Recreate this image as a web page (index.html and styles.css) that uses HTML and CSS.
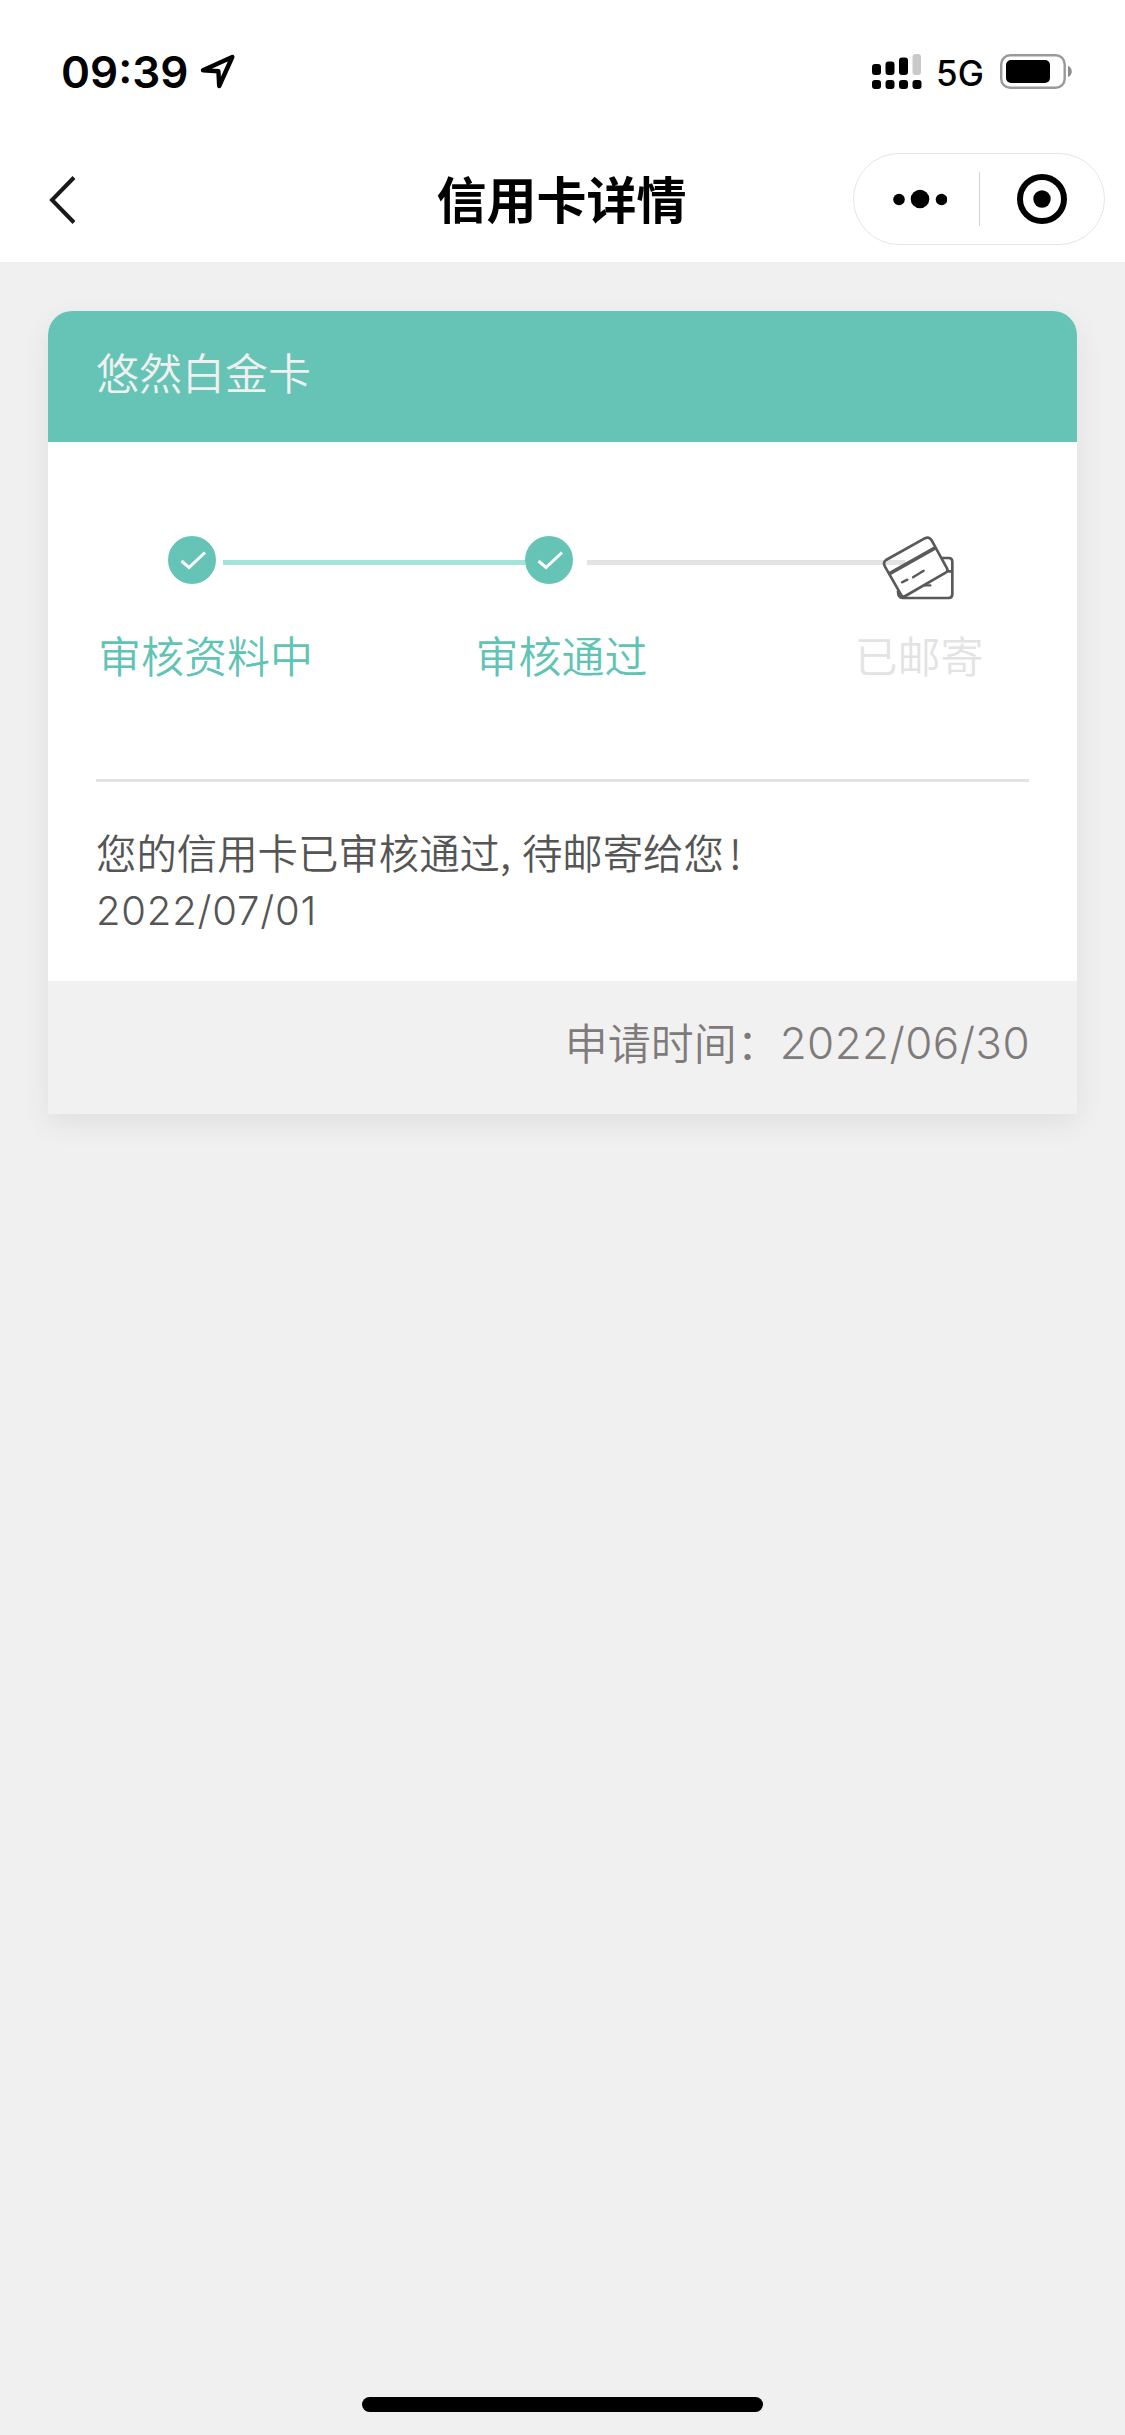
FILE: index.html
```html
<!DOCTYPE html>
<html lang="zh-CN">
<head>
<meta charset="utf-8">
<title>信用卡详情</title>
<link rel="stylesheet" href="styles.css">
</head>
<body>
<div class="screen">
  <header class="top">
    <div class="status-bar">
      <span class="clock">09:39</span>
      <svg class="location" width="36" height="36" viewBox="0 0 36 36"><path d="M3 16.2 32.3 3 19.2 32 18.4 17.3Z" fill="none" stroke="#000" stroke-width="4.4" stroke-linejoin="round"/></svg>
      <svg class="signal" width="50" height="36" viewBox="0 0 50 36">
        <rect x="0" y="10" width="9" height="11" rx="3"/><rect x="13.5" y="7.500" width="9" height="13.500" rx="3"/><rect x="27" y="3.500" width="9" height="17.500" rx="3"/><rect x="40.500" y="0" width="8.500" height="21" rx="3" fill="#c9c9c9"/>
        <rect x="0" y="26" width="9" height="9" rx="3"/><rect x="13.500" y="26" width="9" height="9" rx="3"/><rect x="27" y="26" width="9" height="9" rx="3"/><rect x="40.500" y="26" width="9" height="9" rx="3"/>
      </svg>
      <span class="network">5G</span>
      <svg class="battery" width="73" height="36" viewBox="0 0 73 36"><rect x="1.200" y="1.200" width="63.500" height="32.600" rx="9" fill="none" stroke="#999" stroke-width="2.400"/><rect x="6" y="6" width="44" height="23" rx="5"/><path d="M68 12c5 1.500 5 9.500 0 11Z" fill="#8c8c8c"/></svg>
    </div>
    <div class="nav-bar">
      <svg class="back" width="28" height="50" viewBox="0 0 28 50"><path d="M25 2.500 3 25 25 47.500" fill="none" stroke="#1a1a1a" stroke-width="4"/></svg>
      <h1 class="title">信用卡详情</h1>
      <div class="capsule">
        <svg class="dots" width="54" height="20" viewBox="0 0 54 20"><circle cx="6" cy="10.500" r="5.800"/><circle cx="27" cy="10" r="9.300"/><circle cx="48.500" cy="10.500" r="5.800"/></svg>
        <span class="separator"></span>
        <svg class="target" width="50" height="50" viewBox="0 0 50 50"><circle cx="25" cy="25" r="22" fill="none" stroke="#000" stroke-width="6"/><circle cx="25" cy="25" r="8.700"/></svg>
      </div>
    </div>
  </header>
  <main class="content">
    <section class="card">
      <div class="card-name">悠然白金卡</div>
      <div class="card-body">
        <div class="track">
          <svg class="check" width="48" height="48" viewBox="0 0 48 48"><circle cx="24" cy="24" r="24" fill="#65c4b5"/><path d="M13.500 25 21 31.500 37 16.500" fill="none" stroke="#fff" stroke-width="3"/></svg>
          <span class="line line-done"></span>
          <svg class="check" width="48" height="48" viewBox="0 0 48 48"><circle cx="24" cy="24" r="24" fill="#65c4b5"/><path d="M13.500 25 21 31.500 37 16.500" fill="none" stroke="#fff" stroke-width="3"/></svg>
          <span class="line line-todo"></span>
          <svg class="cards" width="77" height="66" viewBox="180 75 231 198" fill="none" stroke="#595959" stroke-width="8" stroke-linejoin="round" stroke-linecap="round">
            <path d="M366 144h20q11 0 11 12v97q0 11-11 11H248q-14 0-14-20M382 184h14"/>
            <path d="M198 150 314 85q13-7 21 6l46 84q4 8-4 13L256 258q-8 5-13-4l-48-84q-7-13 3-20Z"/>
            <path d="M210 190 343 115" stroke-width="11"/>
            <path d="M246 217 262 209M279 202 311 182M314 226h17" stroke-width="7"/>
          </svg>
        </div>
        <div class="labels"><span>审核资料中</span><span>审核通过</span><span class="pending">已邮寄</span></div>
        <div class="message">
          <p>您的信用卡已审核通过<span class="comma">,</span>待邮寄给您<span class="bang">!</span></p>
          <p class="date">2022/07/01</p>
        </div>
      </div>
      <div class="card-foot"><span>申请时间：</span><span class="apply-date">2022/06/30</span></div>
    </section>
  </main>
  <div class="home-bar"></div>
</div>
</body>
</html>
```
FILE: styles.css
```css
* { box-sizing: border-box; }
body, h1, p { margin: 0; }
body {
  background: #f0f0f0;
  font-family: "Noto Sans CJK SC", sans-serif;
}
svg { display: block; flex: none; }
.screen {
  height: 2435px;
  display: flex;
  flex-direction: column;
}
.top { height: 262px; background: #fff; }
.status-bar {
  height: 142px;
  padding: 54px 53px 0 61px;
  display: flex;
  align-items: flex-start;
  font-family: Inter, sans-serif;
}
.clock {
  width: 139px;
  font-size: 44px;
  font-weight: 600;
  line-height: 36px;
}
.signal { margin-left: auto; }
.network {
  width: 62px;
  margin: 1px 0 0 14px;
  font-size: 35px;
  font-weight: 500;
  line-height: 36px;
}
.battery { margin: 0 -1px 0 2px; }
.nav-bar {
  height: 115px;
  padding: 0 20px 0 49px;
  display: grid;
  grid-template-columns: 221px 1fr 252px;
  align-items: center;
}
.title {
  margin-top: -5px;
  text-align: center;
  font-size: 50px;
  font-weight: 700;
  line-height: 60px;
}
.capsule {
  width: 252px;
  height: 92px;
  margin-top: -1px;
  border: 1px solid #e6e6e6;
  border-radius: 46px;
  padding: 0 37px 0 39px;
  display: flex;
  align-items: center;
  justify-content: space-between;
}
.separator { width: 1px; height: 54px; background: #d2d2d2; margin-right: 5px; }
.content { flex: 1; padding: 49px 48px 0; }
.card {
  height: 803px;
  border-radius: 24px 24px 0 0;
  background: #fff;
  box-shadow: 0 10px 30px rgba(0, 0, 0, .07);
}
.card-name {
  height: 131px;
  padding: 28px 48px 0;
  border-radius: 24px 24px 0 0;
  background: #65c4b5;
  color: #f0f0f0;
  font-size: 43px;
  font-weight: 350;
  line-height: 64px;
}
.card-body { height: 539px; padding: 93px 48px 0; }
.track { height: 87px; padding: 1px 0 0 72px; display: flex; }
.line { height: 5px; margin-top: 24px; }
.line-done { width: 302px; margin-left: 7px; background: #a3e4d9; }
.line-todo { width: 318px; margin: 24px -25px 0 14px; background: #e3e3e3; }
.cards { margin-top: -1px; }
.labels {
  height: 157px;
  padding-left: 2px;
  display: grid;
  grid-template-columns: 377.5px 380px auto;
  color: #5fc4b4;
  font-size: 43px;
  font-weight: 350;
  line-height: 64px;
}
.pending { color: #e3e3e3; margin-left: -1px; }
.message {
  border-top: 3px solid #e3e3e3;
  padding-top: 41px;
  color: #555;
  font-size: 40.4px;
  font-weight: 350;
  line-height: 58px;
}
.comma { display: inline-block; width: 22px; }
.bang { display: inline-block; width: 20px; padding-left: 5px; }
.date {
  padding-top: 1px;
  font-family: Inter, sans-serif;
  font-size: 40px;
  font-weight: 350;
  letter-spacing: .8px;
}
.card-foot {
  height: 133px;
  padding: 28px 48px 0;
  display: flex;
  justify-content: flex-end;
  background: #f1f1f1;
  color: #807b7b;
  font-size: 43px;
  font-weight: 350;
  line-height: 64px;
}
.apply-date {
  padding-top: 2px;
  margin-right: -1px;
  font-family: Inter, sans-serif;
  font-size: 44px;
  letter-spacing: .4px;
}
.home-bar {
  width: 401px;
  height: 15px;
  margin: 0 auto 23px;
  border-radius: 8px;
  background: #000;
}
```
